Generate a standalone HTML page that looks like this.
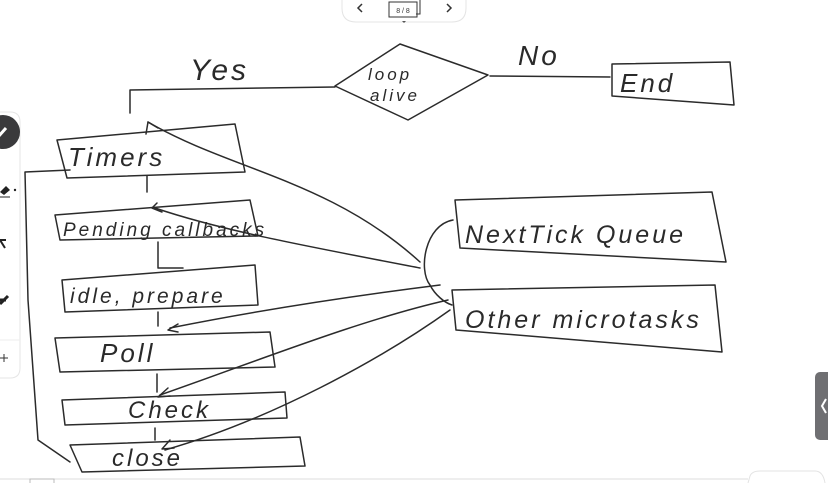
<!DOCTYPE html>
<html><head><meta charset="utf-8"><style>
html,body{margin:0;padding:0;width:828px;height:483px;overflow:hidden;background:#fff;font-family:"Liberation Sans",sans-serif}
svg{position:absolute;left:0;top:0}
.t{font-family:"Liberation Sans",sans-serif;fill:#2a2a2a;font-style:italic;letter-spacing:3px}
</style></head><body>
<svg width="828" height="483" viewBox="0 0 828 483">
<g fill="none" stroke="#2b2b2b" stroke-width="1.5" stroke-linecap="round" stroke-linejoin="round">
<path d="M335 86 L400 44 L488 75 L408 120 Z"/>
<path d="M335 87 L130 90 L130 113"/>
<path d="M490 76 L610 77"/>
<path d="M612 64 L730 62 L734 105 L612 96 Z"/>
<path d="M57 140 L235 124 L245 172 L67 178 Z"/>
<path d="M147 176 L147 192"/>
<path d="M55 215 L250 200 L258 236 L60 240 Z"/>
<path d="M158 242 L158 268 L183 268"/>
<path d="M62 280 L255 265 L258 305 L65 312 Z"/>
<path d="M158 312 L158 326"/>
<path d="M55 338 L270 332 L275 367 L60 372 Z"/>
<path d="M157 374 L157 392"/>
<path d="M62 400 L285 392 L287 418 L65 425 Z"/>
<path d="M155 428 L155 440"/>
<path d="M70 445 L300 437 L305 466 L82 472 Z"/>
<path d="M70 170 L25 172 L28 300 L38 440 L70 462"/>
<path d="M455 200 L712 192 L726 262 L460 248 Z"/>
<path d="M452 290 L715 285 L722 352 L456 330 Z"/>
<path d="M453 220 C425 225 418 270 430 285 C435 295 445 303 452 305"/>
<path d="M148 122 C230 170 330 180 420 262"/>
<path d="M155 208 C220 230 300 245 420 268"/>
<path d="M170 328 C260 310 360 295 440 285"/>
<path d="M160 395 C260 360 360 320 448 300"/>
<path d="M165 450 C270 420 380 360 450 310"/>
<path d="M148 122 L146 134 M148 122 L158 128"/>
<path d="M152 208 L162 212 M152 208 L157 203"/>
<path d="M168 330 L178 324 M168 330 L178 332"/>
<path d="M158 397 L168 388 M158 397 L170 396"/>
<path d="M162 449 L170 440 M162 449 L174 448"/>
</g>
<text class="t" x="190" y="80" font-size="30">Yes</text>
<text class="t" x="518" y="65" font-size="28">No</text>
<text class="t" x="368" y="80" font-size="17" letter-spacing="1">loop</text>
<text class="t" x="370" y="101" font-size="17" letter-spacing="1">alive</text>
<text class="t" x="620" y="92" font-size="26">End</text>
<text class="t" x="68" y="166" font-size="26">Timers</text>
<text class="t" x="63" y="236" font-size="19" letter-spacing="0.5">Pending callbacks</text>
<text class="t" x="70" y="303" font-size="21" letter-spacing="2">idle, prepare</text>
<text class="t" x="100" y="362" font-size="26" letter-spacing="10">Poll</text>
<text class="t" x="128" y="418" font-size="24" letter-spacing="4">Check</text>
<text class="t" x="112" y="466" font-size="24" letter-spacing="10">close</text>
<text class="t" x="465" y="243" font-size="25" letter-spacing="2">NextTick Queue</text>
<text class="t" x="465" y="328" font-size="25" letter-spacing="2">Other microtasks</text>
<path d="M342 0 L342 8 Q342 22 356 22 L452 22 Q466 22 466 8 L466 0" fill="#fff" stroke="#e4e4e4"/>
<path d="M362 4 L358 8 L362 12" fill="none" stroke="#333" stroke-width="1.5"/>
<path d="M447 4 L451 8 L447 12" fill="none" stroke="#333" stroke-width="1.5"/>
<rect x="389" y="2" width="28" height="15" fill="#fff" stroke="#333"/>
<text x="403" y="13" font-size="7" text-anchor="middle" fill="#333">8 / 8</text>
<path d="M420 0 L420 14 L416 14" fill="none" stroke="#333"/>
<path d="M402 21 L406 21 L404 23 Z" fill="#555"/>
<path d="M0 112 L10 112 Q20 112 20 122 L20 368 Q20 378 10 378 L0 378" fill="#fff" stroke="#e6e6e6"/>
<circle cx="3" cy="132" r="17" fill="#3a3a3c"/>
<path d="M-2 137 L6 128" stroke="#fff" stroke-width="3"/>
<path d="M0 192 L6 186 L10 190 L4 195 Z" fill="#222"/><path d="M0 197 L10 197" stroke="#222"/>
<circle cx="15" cy="190" r="1.2" fill="#222"/>
<path d="M0 240 L5 248 M0 240 L6 240" stroke="#222" stroke-width="2"/>
<path d="M0 304 L8 296 M0 300 L6 300" stroke="#222" stroke-width="3"/>
<path d="M0 340 L20 340" stroke="#eee"/>
<path d="M0 358 L8 358 M4 354 L4 362" stroke="#333"/>
<rect x="815" y="372" width="20" height="68" rx="5" fill="#6f6f72"/>
<path d="M826 399 L822 406 L826 413" fill="none" stroke="#fff" stroke-width="2"/>
<path d="M0 479 L748 479" stroke="#ddd"/>
<path d="M748 483 L750 476 Q752 471 760 471 L815 471 Q823 471 825 483" fill="#fff" stroke="#e3e3e3"/>
<rect x="30" y="479" width="24" height="6" fill="#fff" stroke="#bbb"/>
</svg>
</body></html>
